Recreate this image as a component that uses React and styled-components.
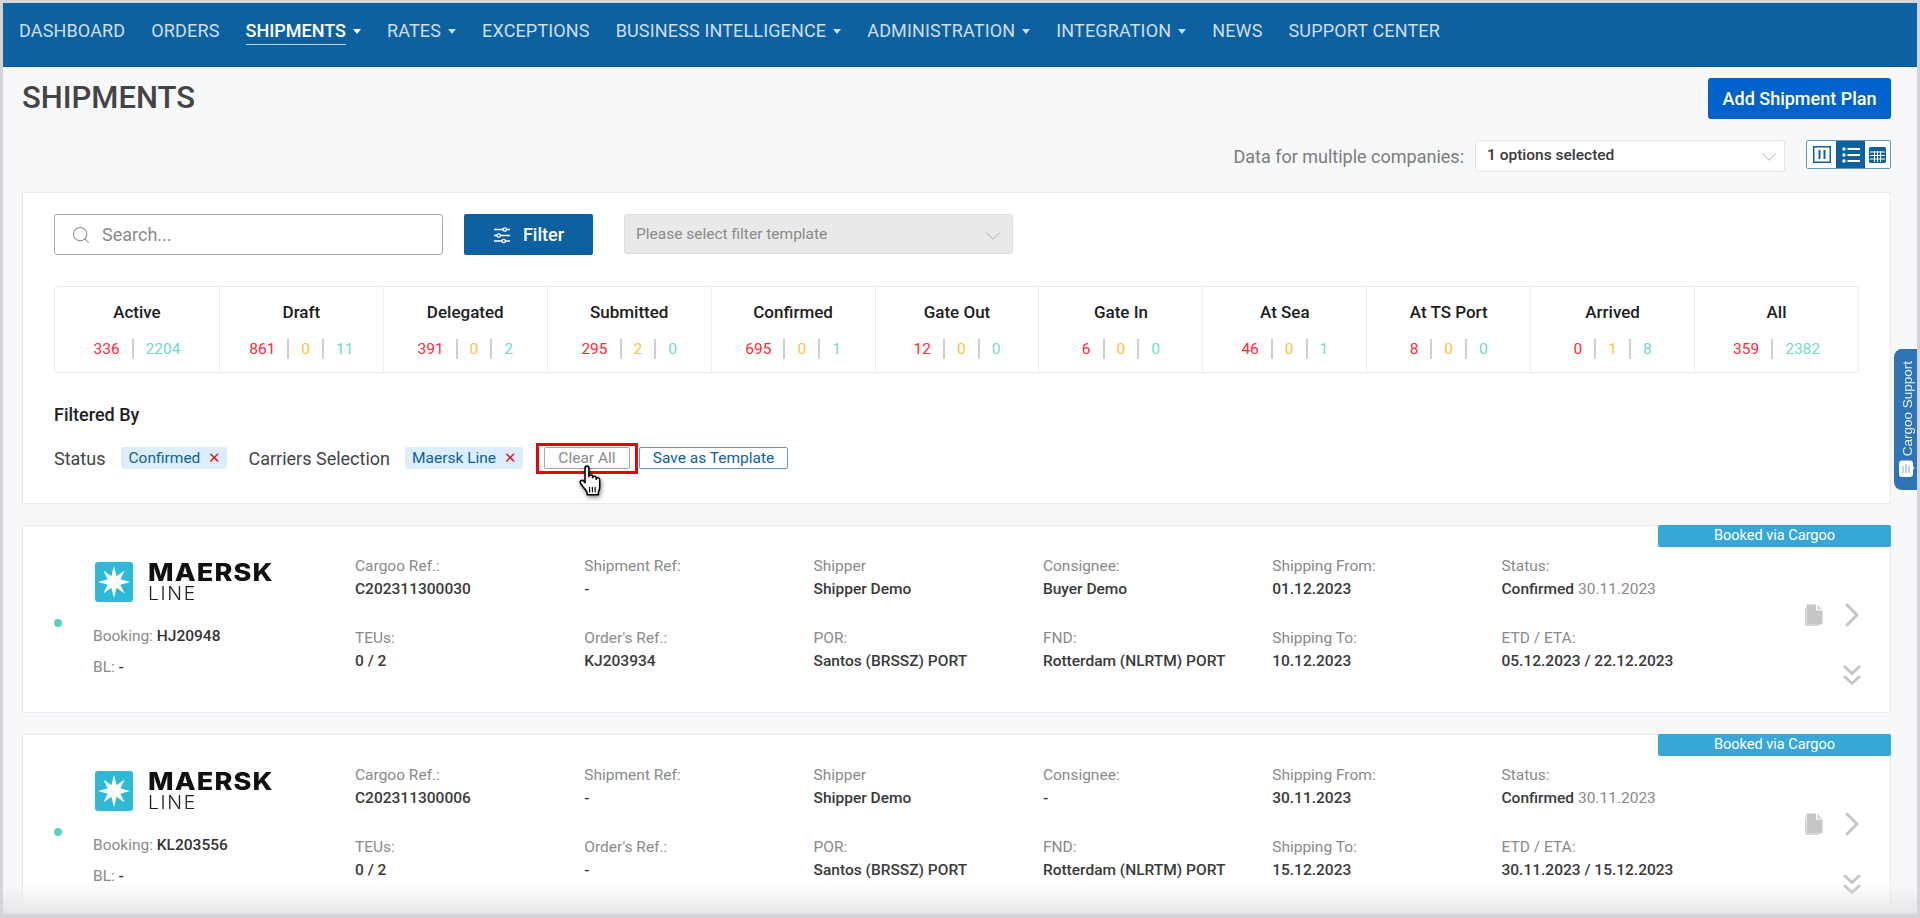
import React from 'react';
import styled, { createGlobalStyle } from 'styled-components';
import { ChevronDown, Search } from 'lucide-react';

const GlobalStyle = createGlobalStyle`
  html, body { margin: 0; padding: 0; height: 100%; overflow: hidden; background: #d3d5d9; }
  body { font-family: Roboto, "Liberation Sans", sans-serif; }
  * { box-sizing: border-box; }
`;

// grey frame around the whole screenshot
const Frame = styled.div`
  position: relative;
  width: 1920px;
  height: 918px;
  padding: 3px 3px 4px 3px;
  overflow: hidden;
`;

const Page = styled.div`
  position: relative;
  height: 100%;
  background: #f7f8fa;
  overflow: hidden;
`;

const Nav = styled.nav`
  display: flex;
  align-items: flex-start;
  height: 64px;
  padding: 14px 0 0 16px;
  gap: 26px;
  background: #0e61a1;
  border-bottom: 1px solid #0a5a9a;
`;

const NavItem = styled.a`
  display: flex;
  align-items: center;
  font-size: 18px;
  letter-spacing: ${(p) => (p.$active ? '0' : '0.15px')};
  color: ${(p) => (p.$active ? '#ffffff' : '#cfdeec')};
  font-weight: ${(p) => (p.$active ? 500 : 400)};
  white-space: nowrap;
`;

const NavLabel = styled.span`
  display: block;
  line-height: 27px;
  border-bottom: 1px solid ${(p) => (p.$active ? '#b9d0e4' : 'transparent')};
`;

const Caret = styled.i`
  width: 0;
  height: 0;
  margin: 0 0 0 7px;
  border-left: 4px solid transparent;
  border-right: 4px solid transparent;
  border-top: 5px solid currentColor;
`;

const Content = styled.div`
  padding: 11px 26px 0 19px;
`;

const TitleRow = styled.div`
  display: flex;
  justify-content: space-between;
  align-items: flex-start;
`;

const Title = styled.h1`
  margin: 2px 0 0;
  font-size: 31px;
  line-height: 36px;
  font-weight: 500;
  color: #444444;
`;

const AddButton = styled.button`
  width: 183px;
  height: 41px;
  border: none;
  border-radius: 3px;
  background: #0062cc;
  color: #ffffff;
  font-family: inherit;
  font-size: 18px;
  font-weight: 500;
`;

const OptionsRow = styled.div`
  display: flex;
  justify-content: flex-end;
  align-items: center;
  margin-top: 21px;
  height: 32px;
`;

const OptionsLabel = styled.span`
  font-size: 18px;
  color: #7c7c7c;
  margin-right: 11px;
`;

const CompanySelect = styled.div`
  display: flex;
  align-items: center;
  justify-content: space-between;
  width: 310px;
  height: 32px;
  padding: 0 2px 2px 11px;
  background: #ffffff;
  border: 1px solid #e2e4e8;
  border-radius: 3px;
  font-size: 15.5px;
  font-weight: 500;
  color: #3a3a3a;
  margin-right: 21px;
`;

const SelectArrow = styled(ChevronDown)`
  margin-top: 4px;
  color: #a0a0a0;
`;

const ViewToggle = styled.div`
  display: grid;
  grid-template-columns: 29px 29px 25px;
  width: 85px;
  height: 29px;
  margin-top: -3px;
  border: 1px solid #5f9ac8;
  border-radius: 2px;
  background: #fff;
`;

const ViewCell = styled.div`
  display: flex;
  align-items: center;
  justify-content: center;
  color: ${(p) => (p.$active ? '#ffffff' : '#0e61a1')};
  background: ${(p) => (p.$active ? '#0e61a1' : 'transparent')};
`;

const Panel = styled.section`
  height: 312px;
  margin-top: 20px;
  padding: 21px 32px 0 31px;
  background: #ffffff;
  border: 1px solid #e8eaee;
`;

const ToolRow = styled.div`
  display: flex;
  align-items: flex-start;
`;

const SearchBox = styled.div`
  display: flex;
  align-items: center;
  width: 389px;
  height: 41px;
  padding-left: 16px;
  border: 1px solid #ababab;
  border-radius: 3px;
  font-size: 18px;
  color: #8b8b8b;
  gap: 11px;
`;

const FilterButton = styled.button`
  display: flex;
  align-items: center;
  justify-content: center;
  gap: 12px;
  width: 129px;
  height: 41px;
  margin-left: 21px;
  border: none;
  border-radius: 2px;
  background: #0e61a1;
  color: #ffffff;
  font-family: inherit;
  font-size: 18px;
  font-weight: 500;
`;

const TemplateSelect = styled.div`
  display: flex;
  align-items: center;
  justify-content: space-between;
  width: 389px;
  height: 40px;
  margin-left: 31px;
  padding: 0 6px 0 11px;
  background: #e9e9e9;
  border: 1px solid #dddddd;
  border-radius: 3px;
  font-size: 15.5px;
  color: #8a8a8a;
`;

const StatsTable = styled.div`
  display: grid;
  grid-template-columns: repeat(11, 1fr);
  width: 1805px;
  height: 87px;
  margin-top: 31px;
  border: 1px solid #e8ebef;
  border-radius: 3px;
`;

const StatCell = styled.div`
  display: flex;
  flex-direction: column;
  align-items: center;
  padding-top: 14px;
  & + & { border-left: 1px solid #e8ebef; }
`;

const StatLabel = styled.div`
  font-size: 17px;
  line-height: 22px;
  font-weight: 500;
  color: #1d1d1d;
`;

const StatNumbers = styled.div`
  display: flex;
  align-items: center;
  margin-top: 15px;
  font-size: 15.5px;
  line-height: 22px;
`;

const StatNumber = styled.span`
  color: ${(p) => p.$color};
`;

const StatSeparator = styled.i`
  width: 2px;
  height: 20px;
  margin: 0 12px;
  background: #cfcfcf;
`;

const FilteredTitle = styled.div`
  margin-top: 30px;
  font-size: 18px;
  line-height: 24px;
  font-weight: 500;
  color: #222222;
`;

const FilterRow = styled.div`
  display: flex;
  align-items: center;
  height: 22px;
  margin-top: 20px;
`;

const FilterName = styled.span`
  font-size: 18px;
  color: #444444;
  margin-right: ${(p) => p.$gap}px;
`;

const Chip = styled.span`
  display: flex;
  align-items: center;
  justify-content: space-between;
  width: ${(p) => p.$width}px;
  height: 22px;
  padding: 0 6px 0 7px;
  margin-right: ${(p) => p.$gap}px;
  background: #dceefb;
  border-radius: 2px;
  font-size: 15.5px;
  color: #0e61a1;
`;

const ChipClose = styled.span`
  color: #d0222a;
  font-size: 15px;
`;

const HighlightBox = styled.div`
  display: flex;
  align-items: center;
  justify-content: center;
  flex: none;
  width: 102px;
  height: 31px;
  margin-right: 1px;
  border: 3px solid #e8000b;
`;

const SmallButton = styled.button`
  flex: none;
  width: ${(p) => p.$width}px;
  height: 22px;
  padding: 0;
  background: #ffffff;
  border: 1px solid ${(p) => (p.$muted ? '#a8a8a8' : '#5f9ac8')};
  border-radius: 2px;
  color: ${(p) => (p.$muted ? '#8b8b8b' : '#0e61a1')};
  font-family: inherit;
  font-size: 15.5px;
`;

const Pointer = styled.svg`
  position: absolute;
  left: 574px;
  top: 462px;
  filter: drop-shadow(1px 2px 2px rgba(0, 0, 0, 0.45));
`;

const Card = styled.article`
  position: relative;
  display: flex;
  height: 188px;
  margin-top: 21px;
  padding: 29px 0 0 31px;
  background: #ffffff;
  border: 1px solid #e8eaee;
  border-radius: 2px;
`;

const BookedBadge = styled.div`
  position: absolute;
  top: -1px;
  right: -1px;
  width: 233px;
  height: 22px;
  background: #37a7d8;
  border-radius: 2px;
  color: #ffffff;
  font-size: 14.5px;
  line-height: 22px;
  text-align: center;
`;

const StatusDot = styled.div`
  flex: none;
  width: 8px;
  height: 8px;
  margin: 64px 31px 0 0;
  border-radius: 50%;
  background: #5bd0c8;
`;

const CarrierCol = styled.div`
  flex: none;
  width: 262px;
`;

const Logo = styled.div`
  display: flex;
  height: 40px;
  margin: 7px 0 23px 2px;
`;

const LogoText = styled.div`
  margin-left: 15px;
`;

const LogoName = styled.div`
  font-family: Inter, sans-serif;
  font-size: 24px;
  line-height: 21px;
  font-weight: 800;
  letter-spacing: 1px;
  color: #111111;
  transform: scaleX(1.13);
  transform-origin: left center;
`;

const LogoLine = styled.div`
  font-family: Inter, sans-serif;
  font-size: 18px;
  line-height: 22px;
  font-weight: 300;
  letter-spacing: 1.5px;
  color: #222222;
  transform: scaleX(1.08);
  transform-origin: left center;
`;

const CarrierLine = styled.div`
  font-size: 15.5px;
  line-height: 23px;
  margin-bottom: 8px;
  color: #8a8a8a;
`;

const Strong = styled.span`
  color: #333333;
  font-weight: 500;
`;

const FieldGrid = styled.div`
  flex: none;
  display: grid;
  grid-template-columns: repeat(6, 229.3px);
  grid-auto-rows: 46px;
  row-gap: 26px;
`;

const FieldLabel = styled.div`
  font-size: 15.5px;
  line-height: 23px;
  color: #8a8a8a;
`;

const FieldValue = styled.div`
  font-size: 15.5px;
  line-height: 23px;
  font-weight: 500;
  color: #3a3a3a;
`;

const Muted = styled.span`
  font-weight: 400;
  color: #8a8a8a;
`;

const Actions = styled.div`
  display: flex;
  flex-direction: column;
  padding: 48px 0 0 73px;
  color: #c6c6c6;
`;

const ActionTop = styled.div`
  display: flex;
  align-items: center;
  gap: 22px;
  height: 24px;
`;

const ActionDown = styled.div`
  margin: 38px 0 0 39px;
`;

const SupportTab = styled.div`
  position: absolute;
  top: 346px;
  right: 0;
  display: flex;
  flex-direction: column;
  align-items: center;
  justify-content: flex-end;
  width: 23px;
  height: 141px;
  padding: 0 0 13px 3px;
  gap: 4px;
  background: #2f74b5;
  border-radius: 8px 0 0 8px;
`;

const SupportText = styled.span`
  writing-mode: vertical-rl;
  transform: rotate(180deg);
  font-family: "Liberation Sans", Arial, sans-serif;
  font-size: 13.5px;
  color: #eaf2f9;
  white-space: nowrap;
`;

const BottomFade = styled.div`
  position: absolute;
  left: 0;
  right: 0;
  bottom: 0;
  height: 30px;
  background: linear-gradient(to bottom, rgba(235, 236, 238, 0), rgba(228, 229, 231, 0.95));
`;

const navItems = [
  { label: 'DASHBOARD' },
  { label: 'ORDERS' },
  { label: 'SHIPMENTS', caret: true, active: true },
  { label: 'RATES', caret: true },
  { label: 'EXCEPTIONS' },
  { label: 'BUSINESS INTELLIGENCE', caret: true },
  { label: 'ADMINISTRATION', caret: true },
  { label: 'INTEGRATION', caret: true },
  { label: 'NEWS' },
  { label: 'SUPPORT CENTER' },
];

const RED = '#ff2a33';
const YELLOW = '#ffbe3d';
const TEAL = '#6fd8d0';

const stats = [
  { label: 'Active', values: [336, 2204], two: true },
  { label: 'Draft', values: [861, 0, 11] },
  { label: 'Delegated', values: [391, 0, 2] },
  { label: 'Submitted', values: [295, 2, 0] },
  { label: 'Confirmed', values: [695, 0, 1] },
  { label: 'Gate Out', values: [12, 0, 0] },
  { label: 'Gate In', values: [6, 0, 0] },
  { label: 'At Sea', values: [46, 0, 1] },
  { label: 'At TS Port', values: [8, 0, 0] },
  { label: 'Arrived', values: [0, 1, 8] },
  { label: 'All', values: [359, 2382], two: true },
];

const shipments = [
  {
    booking: 'HJ20948',
    fields: [
      ['Cargoo Ref.:', 'C202311300030'],
      ['Shipment Ref:', '-'],
      ['Shipper', 'Shipper Demo'],
      ['Consignee:', 'Buyer Demo'],
      ['Shipping From:', '01.12.2023'],
      ['Status:', 'Confirmed', '30.11.2023'],
      ['TEUs:', '0 / 2'],
      ["Order's Ref.:", 'KJ203934'],
      ['POR:', 'Santos (BRSSZ) PORT'],
      ['FND:', 'Rotterdam (NLRTM) PORT'],
      ['Shipping To:', '10.12.2023'],
      ['ETD / ETA:', '05.12.2023 / 22.12.2023'],
    ],
  },
  {
    booking: 'KL203556',
    fields: [
      ['Cargoo Ref.:', 'C202311300006'],
      ['Shipment Ref:', '-'],
      ['Shipper', 'Shipper Demo'],
      ['Consignee:', '-'],
      ['Shipping From:', '30.11.2023'],
      ['Status:', 'Confirmed', '30.11.2023'],
      ['TEUs:', '0 / 2'],
      ["Order's Ref.:", '-'],
      ['POR:', 'Santos (BRSSZ) PORT'],
      ['FND:', 'Rotterdam (NLRTM) PORT'],
      ['Shipping To:', '15.12.2023'],
      ['ETD / ETA:', '30.11.2023 / 15.12.2023'],
    ],
  },
];

const MaerskMark = () => (
  <svg width="38" height="40" viewBox="0 0 38 40">
    <rect width="38" height="40" rx="3" fill="#2fb9d8" />
    <polygon
      fill="#ffffff"
      points="19,4 21.6,14.2 29.6,8.4 25.4,17.2 35,20 25.4,22.8 29.6,31.6 21.6,25.8 19,36 16.4,25.8 8.4,31.6 12.6,22.8 3,20 12.6,17.2 8.4,8.4 16.4,14.2"
    />
  </svg>
);

const FilterIcon = () => (
  <svg width="18" height="18" viewBox="0 0 18 18" fill="none" stroke="currentColor" strokeWidth="1.3">
    <path d="M1 3.5h9M13.5 3.5h3.5M1 9.5h3M7.5 9.5h9.5M1 15h8M12.5 15h4.5" />
    <circle cx="11.7" cy="3.5" r="1.7" />
    <circle cx="5.7" cy="9.5" r="1.7" />
    <circle cx="10.7" cy="15" r="1.7" />
  </svg>
);

const ColumnsIcon = () => (
  <svg width="18" height="17" viewBox="0 0 18 17" fill="none" stroke="currentColor">
    <rect x="0.75" y="0.75" width="16.5" height="15.5" strokeWidth="1.5" />
    <path d="M6.5 4v9M11.5 4v9" strokeWidth="2" />
  </svg>
);

const ListIcon = () => (
  <svg width="18" height="16" viewBox="0 0 18 16" fill="currentColor">
    <circle cx="2" cy="2" r="1.7" />
    <circle cx="2" cy="8" r="1.7" />
    <circle cx="2" cy="14" r="1.7" />
    <rect x="5.5" y="1" width="12.5" height="2" />
    <rect x="5.5" y="7" width="12.5" height="2" />
    <rect x="5.5" y="13" width="12.5" height="2" />
  </svg>
);

const GridIcon = () => (
  <svg width="17" height="16" viewBox="0 0 17 16">
    <rect width="17" height="16" rx="1.5" fill="currentColor" />
    <path d="M1 5h15M1 8.5h15M1 12h15M5.5 4v11M8.5 4v11M11.5 4v11" stroke="#ffffff" strokeWidth="1" />
  </svg>
);

const DocsIcon = () => (
  <svg width="19" height="23" viewBox="0 0 19 23" fill="currentColor">
    <path d="M1 4h1v16.5h13v1.5H2a1 1 0 0 1-1-1z" opacity="0.75" />
    <path d="M3.5 0.5H12v6h6.5v13a1 1 0 0 1-1 1h-14a1 1 0 0 1-1-1v-18a1 1 0 0 1 1-1z" />
    <path d="M13 0.5l5.5 5H13z" opacity="0.7" />
  </svg>
);

const ArrowRight = () => (
  <svg width="14" height="24" viewBox="0 0 14 24" fill="none" stroke="currentColor" strokeWidth="3" strokeLinecap="round">
    <path d="M2 2l10 10L2 22" />
  </svg>
);

const ArrowsDown = () => (
  <svg width="18" height="21" viewBox="0 0 18 21" fill="none" stroke="currentColor" strokeWidth="3" strokeLinecap="round">
    <path d="M2 2l7 6.5L16 2M2 12l7 6.5L16 12" />
  </svg>
);

const SupportIcon = () => (
  <svg width="16" height="17" viewBox="0 0 16 17">
    <path d="M3 0.5h8a3 3 0 0 1 3 3v2.6l1.6 2.4-1.6.6v4.9a3 3 0 0 1-3 3H3a3 3 0 0 1-3-3v-10.5a3 3 0 0 1 3-3z" fill="#ffffff" />
    <path d="M4 6v7M7 4.5v8.5M10 6v7" stroke="#8db6d9" strokeWidth="1.2" />
  </svg>
);

const HandPointer = () => (
  <Pointer width="28" height="33" viewBox="0 0 30 36">
    <path
      d="M8.5 3.5c0-3 4.2-3 4.2 0v9.3c0-2.4 4-2.4 4 0v1.2c0-2.3 4-2.3 4 .3v1.2c0-2.2 3.8-2 3.8.6v8.4c0 2.500-1 3.900-1.500 5.500v2.500H10.800v-2.700c-1.500-2.400-4.700-6-7-9.300-2-3 1.400-5 3.400-2.700l1.300 1.500z"
      fill="#ffffff"
      stroke="#000000"
      strokeWidth="1.7"
      strokeLinejoin="round"
    />
    <path d="M13.5 24v6M16.5 24v6M19.5 24v6" stroke="#000000" strokeWidth="1.2" />
  </Pointer>
);

const App = () => (
  <Frame>
    <GlobalStyle />
    <Page>
      <Nav>
        {navItems.map((item) => (
          <NavItem key={item.label} $active={item.active}>
            <NavLabel $active={item.active}>{item.label}</NavLabel>
            {item.caret && <Caret />}
          </NavItem>
        ))}
      </Nav>

      <Content>
        <TitleRow>
          <Title>SHIPMENTS</Title>
          <AddButton>Add Shipment Plan</AddButton>
        </TitleRow>

        <OptionsRow>
          <OptionsLabel>Data for multiple companies:</OptionsLabel>
          <CompanySelect>
            1 options selected
            <SelectArrow size={26} strokeWidth={0.8} />
          </CompanySelect>
          <ViewToggle>
            <ViewCell><ColumnsIcon /></ViewCell>
            <ViewCell $active><ListIcon /></ViewCell>
            <ViewCell><GridIcon /></ViewCell>
          </ViewToggle>
        </OptionsRow>

        <Panel>
          <ToolRow>
            <SearchBox>
              <Search size={20} strokeWidth={1.25} color="#8b8b8b" />
              Search...
            </SearchBox>
            <FilterButton>
              <FilterIcon />
              Filter
            </FilterButton>
            <TemplateSelect>
              Please select filter template
              <SelectArrow size={26} strokeWidth={0.8} />
            </TemplateSelect>
          </ToolRow>

          <StatsTable>
            {stats.map((stat) => (
              <StatCell key={stat.label}>
                <StatLabel>{stat.label}</StatLabel>
                <StatNumbers>
                  {stat.values.map((value, i) => {
                    const colors = stat.two ? [RED, TEAL] : [RED, YELLOW, TEAL];
                    return (
                      <React.Fragment key={i}>
                        {i > 0 && <StatSeparator />}
                        <StatNumber $color={colors[i]}>{value}</StatNumber>
                      </React.Fragment>
                    );
                  })}
                </StatNumbers>
              </StatCell>
            ))}
          </StatsTable>

          <FilteredTitle>Filtered By</FilteredTitle>
          <FilterRow>
            <FilterName $gap={16}>Status</FilterName>
            <Chip $width={106} $gap={21}>Confirmed <ChipClose>✕</ChipClose></Chip>
            <FilterName $gap={15}>Carriers Selection</FilterName>
            <Chip $width={118} $gap={13}>Maersk Line <ChipClose>✕</ChipClose></Chip>
            <HighlightBox>
              <SmallButton $muted $width={86}>Clear All</SmallButton>
            </HighlightBox>
            <SmallButton $width={149}>Save as Template</SmallButton>
          </FilterRow>
        </Panel>

        {shipments.map((shipment) => (
          <Card key={shipment.booking}>
            <BookedBadge>Booked via Cargoo</BookedBadge>
            <StatusDot />
            <CarrierCol>
              <Logo>
                <MaerskMark />
                <LogoText>
                  <LogoName>MAERSK</LogoName>
                  <LogoLine>LINE</LogoLine>
                </LogoText>
              </Logo>
              <CarrierLine>Booking: <Strong>{shipment.booking}</Strong></CarrierLine>
              <CarrierLine>BL: <Strong>-</Strong></CarrierLine>
            </CarrierCol>
            <FieldGrid>
              {shipment.fields.map(([label, value, extra]) => (
                <div key={label}>
                  <FieldLabel>{label}</FieldLabel>
                  <FieldValue>
                    {value}{extra && <Muted> {extra}</Muted>}
                  </FieldValue>
                </div>
              ))}
            </FieldGrid>
            <Actions>
              <ActionTop>
                <DocsIcon />
                <ArrowRight />
              </ActionTop>
              <ActionDown><ArrowsDown /></ActionDown>
            </Actions>
          </Card>
        ))}
      </Content>

      <SupportTab>
        <SupportText>Cargoo Support</SupportText>
        <SupportIcon />
      </SupportTab>
      <BottomFade />
      <HandPointer />
    </Page>
  </Frame>
);

export default App;
